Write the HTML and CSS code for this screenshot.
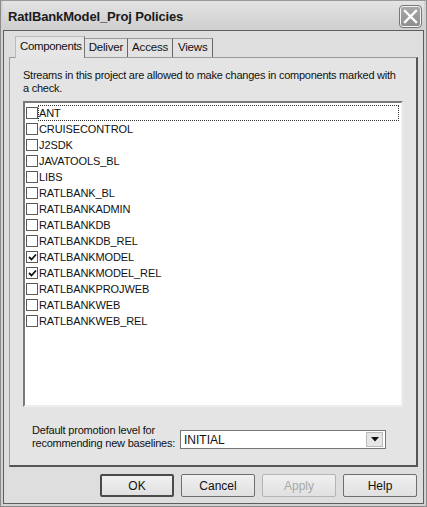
FILE: index.html
```html
<!DOCTYPE html>
<html>
<head>
<meta charset="utf-8">
<link rel="stylesheet" href="styles.css">
</head>
<body>
<div class="window">
  <div class="titlebar">
    <span class="title">RatlBankModel_Proj Policies</span>
    <span class="close"><svg width="15" height="15" viewBox="0 0 15 15"><path d="M2 2 L13 13 M13 2 L2 13" stroke="#fff" stroke-width="2.4" stroke-linecap="square"/></svg></span>
  </div>
  <div class="client">
    <div class="tabs">
      <div class="tab active">Components</div>
      <div class="tab">Deliver</div>
      <div class="tab">Access</div>
      <div class="tab">Views</div>
    </div>
    <div class="panel">
      <p class="desc">Streams in this project are allowed to make changes in components marked with<br>a check.</p>
      <div class="listbox">
        <div class="item"><span class="cb"></span><span class="lbl focus">ANT</span></div>
        <div class="item"><span class="cb"></span><span class="lbl">CRUISECONTROL</span></div>
        <div class="item"><span class="cb"></span><span class="lbl">J2SDK</span></div>
        <div class="item"><span class="cb"></span><span class="lbl">JAVATOOLS_BL</span></div>
        <div class="item"><span class="cb"></span><span class="lbl">LIBS</span></div>
        <div class="item"><span class="cb"></span><span class="lbl">RATLBANK_BL</span></div>
        <div class="item"><span class="cb"></span><span class="lbl">RATLBANKADMIN</span></div>
        <div class="item"><span class="cb"></span><span class="lbl">RATLBANKDB</span></div>
        <div class="item"><span class="cb"></span><span class="lbl">RATLBANKDB_REL</span></div>
        <div class="item"><span class="cb checked"><svg width="9" height="9" viewBox="0 0 9 9"><path d="M1 4 L3.5 6.5 L8 1.5" fill="none" stroke="#111" stroke-width="1.8"/></svg></span><span class="lbl">RATLBANKMODEL</span></div>
        <div class="item"><span class="cb checked"><svg width="9" height="9" viewBox="0 0 9 9"><path d="M1 4 L3.5 6.5 L8 1.5" fill="none" stroke="#111" stroke-width="1.8"/></svg></span><span class="lbl">RATLBANKMODEL_REL</span></div>
        <div class="item"><span class="cb"></span><span class="lbl">RATLBANKPROJWEB</span></div>
        <div class="item"><span class="cb"></span><span class="lbl">RATLBANKWEB</span></div>
        <div class="item"><span class="cb"></span><span class="lbl">RATLBANKWEB_REL</span></div>
      </div>
      <div class="promo">
        <div class="promo-label">Default promotion level for<br>recommending new baselines:</div>
        <div class="combo">
          <span class="combo-text">INITIAL</span>
          <span class="combo-btn"><svg width="8" height="5" viewBox="0 0 8 5"><path d="M0 0 H8 L4 4.5 Z" fill="#111"/></svg></span>
        </div>
      </div>
    </div>
    <div class="buttons">
      <div class="btn default">OK</div>
      <div class="btn">Cancel</div>
      <div class="btn disabled">Apply</div>
      <div class="btn">Help</div>
    </div>
  </div>
</div>
</body>
</html>
```
FILE: styles.css
```css
html, body {
  margin: 0;
  padding: 0;
  background: #dcdcdc;
}
body {
  font-family: "Liberation Sans", Arial, sans-serif;
  color: #111;
}
.window {
  width: 427px;
  height: 507px;
  box-sizing: border-box;
  border: 1px solid #8a8a8a;
  border-top-color: #9a9a9a;
  background: #d2d2d2;
  display: flex;
  flex-direction: column;
  padding: 0 2px 2px 2px;
}
.titlebar {
  height: 29px;
  flex: none;
  display: flex;
  align-items: center;
  justify-content: space-between;
  padding: 0 3px 0 5px;
  background: linear-gradient(#e4e4e4, #d6d6d6 60%, #cfcfcf);
}
.title {
  font-weight: bold;
  font-size: 13px;
  letter-spacing: -0.15px;
  color: #1a1a1a;
  padding-top: 1px;
}
.close {
  width: 21px;
  height: 21px;
  box-sizing: border-box;
  border: 1px solid #f4f4f4;
  outline: 1px solid #777;
  border-radius: 3px;
  background: linear-gradient(#a8a8a8, #8e8e8e);
  display: flex;
  align-items: center;
  justify-content: center;
  margin-top: 2px;
}
.client {
  flex: 1;
  border: 1px solid #5e5e5e;
  background: #dedede;
  display: flex;
  flex-direction: column;
  padding: 6px 5px 6px 5px;
}
.tabs {
  display: flex;
  height: 20px;
  padding-left: 7px;
  align-items: flex-end;
  position: relative;
  z-index: 1;
}
.tab {
  font-size: 11.5px;
  letter-spacing: -0.2px;
  height: 19px;
  box-sizing: border-box;
  padding: 2px 4px 0 4px;
  border: 1px solid #9a9a9a;
  border-bottom: none;
  border-left: none;
  border-right-color: #666;
  background: #e2e2e2;
}
.tab:last-child {
  padding: 2px 5px 0 5px;
}
.tab.active {
  height: 22px;
  padding: 3px 2px 0 4px;
  letter-spacing: -0.35px;
  background: #e6e6e6;
  border-left: 1px solid #bbb;
  border-top-color: #bbb;
  border-right-color: #777;
  margin-bottom: -1px;
  margin-left: -1px;
}
.panel {
  height: 410px;
  box-sizing: border-box;
  border: 1px solid #9a9a9a;
  border-right: 2px solid #555;
  border-bottom: 2px solid #555;
  background: #e4e4e4;
  padding: 11px 12px 0 13px;
  display: flex;
  flex-direction: column;
}
.desc {
  margin: 0;
  font-size: 11px;
  line-height: 13px;
  letter-spacing: -0.25px;
  height: 26px;
  white-space: nowrap;
}
.listbox {
  margin-top: 6px;
  width: 380px;
  height: 306px;
  box-sizing: border-box;
  border: 2px solid #7a7a7a;
  border-right-color: #eee;
  border-bottom-color: #eee;
  background: #fff;
  padding: 2px 0 0 1px;
}
.item {
  height: 16px;
  display: flex;
  align-items: center;
}
.cb {
  width: 12px;
  height: 12px;
  box-sizing: border-box;
  border: 1px solid #5a5a5a;
  background: #fff;
  display: flex;
  align-items: center;
  justify-content: center;
  flex: none;
}
.lbl {
  font-size: 11px;
  letter-spacing: -0.1px;
  line-height: 14px;
  padding: 0 1px 0 0;
  border: 1px solid transparent;
  flex: none;
}
.lbl.focus {
  flex: 1;
  margin-right: 2px;
  border: 1px dotted #333;
}
.promo {
  display: flex;
  align-items: center;
  margin-top: 17px;
  padding-left: 9px;
}
.promo-label {
  font-size: 11px;
  line-height: 13px;
  letter-spacing: -0.2px;
  width: 148px;
  white-space: nowrap;
}
.combo {
  width: 206px;
  height: 19px;
  box-sizing: border-box;
  border: 1px solid #777;
  background: #fff;
  display: flex;
  align-items: center;
  justify-content: space-between;
  padding: 0 2px 0 3px;
  margin-top: 5px;
}
.combo-text {
  font-size: 12px;
}
.combo-btn {
  width: 17px;
  height: 15px;
  box-sizing: border-box;
  border: 1px solid #bbb;
  background: #e6e6e6;
  display: flex;
  align-items: center;
  justify-content: center;
}
.buttons {
  display: flex;
  justify-content: flex-end;
  gap: 7px;
  margin-top: 7px;
  padding-right: 1px;
}
.btn {
  width: 74px;
  height: 23px;
  box-sizing: border-box;
  border: 1px solid #6e6e6e;
  border-radius: 2px;
  background: linear-gradient(#f0f0f0, #e0e0e0);
  font-size: 12px;
  display: flex;
  align-items: center;
  justify-content: center;
}
.btn.default {
  border: 2px solid #4a4a4a;
}
.btn.disabled {
  color: #a8a8a8;
  border-color: #b4b4b4;
}
```
